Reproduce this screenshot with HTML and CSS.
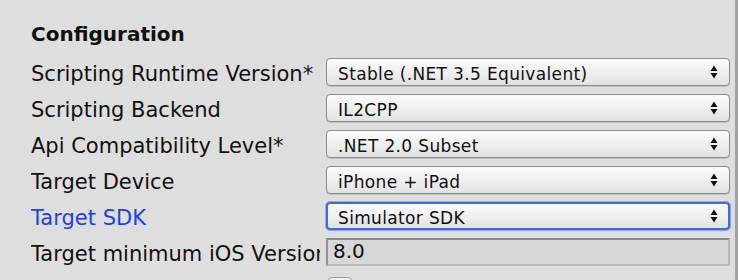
FILE: index.html
```html
<!DOCTYPE html>
<html lang="en">
<head>
    <meta charset="UTF-8">
    <title>Player Settings - Configuration</title>
    <link rel="stylesheet" href="styles.css">
</head>
<body>
    <div class="panel">
        <h2 class="section-title">Configuration</h2>

        <div class="form">
            <div class="label">Scripting Runtime Version*</div>
            <div class="popup">
                <span>Stable (.NET 3.5 Equivalent)</span>
                <svg class="arrows" width="8" height="14" viewBox="0 0 8 14"><polygon points="0.5,6 4,0.5 7.5,6"/><polygon points="0.5,8 4,13.5 7.5,8"/></svg>
            </div>

            <div class="label">Scripting Backend</div>
            <div class="popup">
                <span>IL2CPP</span>
                <svg class="arrows" width="8" height="14" viewBox="0 0 8 14"><polygon points="0.5,6 4,0.5 7.5,6"/><polygon points="0.5,8 4,13.5 7.5,8"/></svg>
            </div>

            <div class="label">Api Compatibility Level*</div>
            <div class="popup">
                <span>.NET 2.0 Subset</span>
                <svg class="arrows" width="8" height="14" viewBox="0 0 8 14"><polygon points="0.5,6 4,0.5 7.5,6"/><polygon points="0.5,8 4,13.5 7.5,8"/></svg>
            </div>

            <div class="label">Target Device</div>
            <div class="popup">
                <span>iPhone + iPad</span>
                <svg class="arrows" width="8" height="14" viewBox="0 0 8 14"><polygon points="0.5,6 4,0.5 7.5,6"/><polygon points="0.5,8 4,13.5 7.5,8"/></svg>
            </div>

            <!-- focused row -->
            <div class="label label-active">Target SDK</div>
            <div class="popup popup-focus">
                <span>Simulator SDK</span>
                <svg class="arrows" width="8" height="14" viewBox="0 0 8 14"><polygon points="0.5,6 4,0.5 7.5,6"/><polygon points="0.5,8 4,13.5 7.5,8"/></svg>
            </div>

            <div class="label">Target minimum iOS Version</div>
            <div class="field">8.0</div>

            <div class="label"></div>
            <div><div class="check"></div></div>
        </div>
    </div>
</body>
</html>
```

FILE: styles.css
```css
body {
    margin: 0;
    background-color: #dedede;
    font-family: "DejaVu Sans", sans-serif;
    color: #111;
    overflow: hidden;
}
.panel {
    height: 280px;
    overflow: hidden;
    border-right: 3px solid #a3a3a3;
    padding: 22px 0 0 31px;
    box-sizing: border-box;
}
.section-title {
    margin: 0 0 12px 0;
    font-size: 20px;
    font-weight: bold;
    line-height: 24px;
}
.form {
    display: grid;
    grid-template-columns: 289px 404px;
    grid-auto-rows: 28px;
    column-gap: 6px;
    row-gap: 8px;
}
.label {
    font-size: 21px;
    line-height: 32px;
    white-space: nowrap;
    overflow: hidden;
}
.label-active {
    color: #1842e6;
}
/* popup buttons */
.popup {
    display: flex;
    justify-content: space-between;
    align-items: center;
    box-sizing: border-box;
    height: 28px;
    padding: 0 11px 0 11px;
    border: 1px solid #8a8a8a;
    border-radius: 4px;
    background: linear-gradient(#fbfbfb, #efefef 50%, #e2e2e2);
    box-shadow: 0 1px 0 #c4c4c4;
    font-size: 17px;
    letter-spacing: 0.35px;
}
.popup span {
    line-height: 24px;
    padding-top: 3px;
}
.arrows {
    fill: #111;
}
.popup-focus {
    border: 2px solid #3d6ae6;
    padding: 0 10px;
    box-shadow: 0 0 0 1px #8ea9f0;
}
.field {
    box-sizing: border-box;
    height: 28px;
    padding-left: 5px;
    border: 2px solid #b9b9b9;
    border-top-color: #8a8a8a;
    border-left-color: #939393;
    background-color: #d7d7d7;
    font-size: 20px;
    line-height: 23px;
}
.check {
    width: 22px;
    height: 20px;
    margin: 3px 0 0 2px;
    border: 1px solid #9a9a9a;
    border-radius: 4px;
    background: linear-gradient(#f6f6f6, #dcdcdc);
}
```
